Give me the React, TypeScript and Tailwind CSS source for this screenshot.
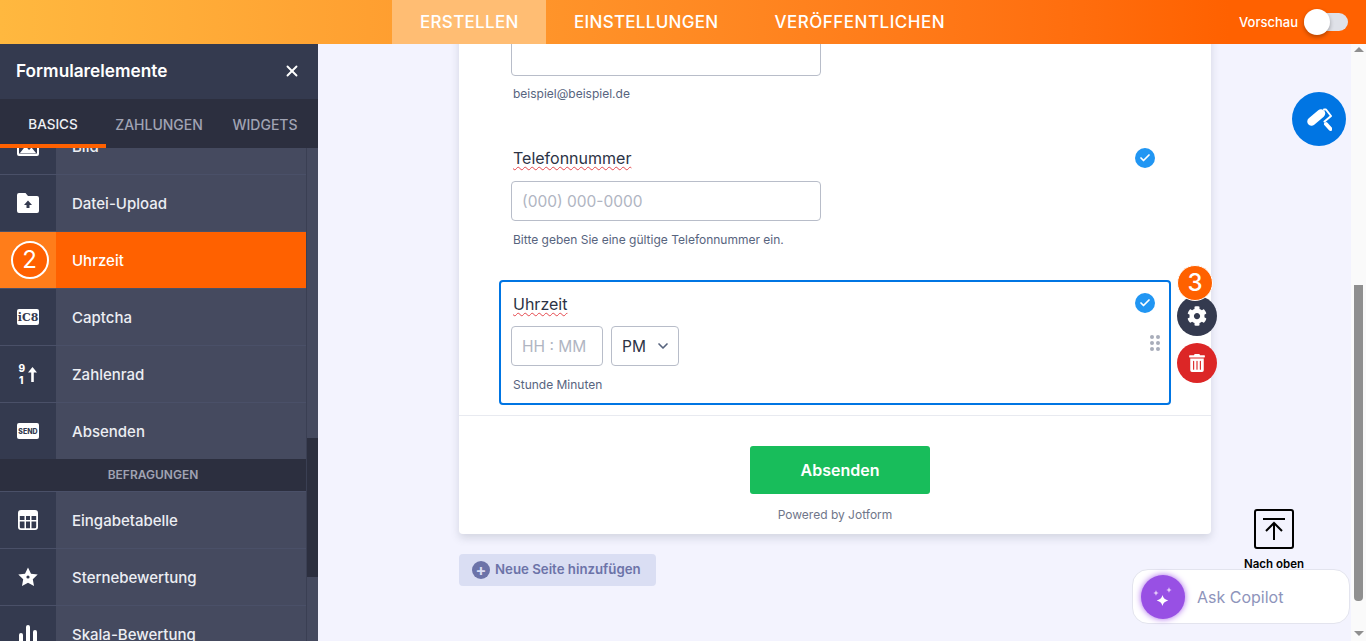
import { Check, ChevronDown, X } from 'lucide-react';
import { FaCog, FaTrashAlt } from 'react-icons/fa';
import type { ReactNode } from 'react';

const FolderIcon = () => (
    <svg width="22" height="20" viewBox="0 0 22 20">
        <path fill="#fff" d="M2 0h6.500l2.500 3h9a2 2 0 0 1 2 2v13a2 2 0 0 1-2 2H2a2 2 0 0 1-2-2V2a2 2 0 0 1 2-2z" />
        <path fill="#343a4f" d="M11 7.500l4 4.500h-2.500v3h-3v-3H7z" />
    </svg>
);

const ImageIcon = () => (
    <svg width="22" height="20" viewBox="0 0 22 20">
        <path fill="#fff" d="M2 0h18a2 2 0 0 1 2 2v16a2 2 0 0 1-2 2H2a2 2 0 0 1-2-2V2a2 2 0 0 1 2-2zm0 2.500V17.500h18V2.500z" />
        <path fill="#fff" d="M3 17l5.500-7 3.500 4 2.500-2.500L19 17z" />
    </svg>
);

const CaptchaIcon = () => (
    <div className="flex h-[16px] w-[22px] items-center justify-center rounded-[2px] bg-white font-['DejaVu_Serif',serif] text-[11px] leading-none font-bold text-[#343a4f]">
        iC8
    </div>
);

const SpinnerIcon = () => (
    <svg width="20" height="26" viewBox="0 -3 20 26">
        <text x="0.500" y="8" fill="#fff" fontSize="10" fontWeight="800" fontFamily="Inter, sans-serif">9</text>
        <text x="1" y="20" fill="#fff" fontSize="10" fontWeight="800" fontFamily="Inter, sans-serif">1</text>
        <path fill="#fff" d="M14.500 3l4.500 5.500h-3.200V18h-2.600V8.500H10z" />
    </svg>
);

const SendIcon = () => (
    <div className="flex h-[16px] w-[22px] items-center justify-center rounded-[2px] bg-white font-['Inter',sans-serif] text-[7px] leading-none font-extrabold text-[#343a4f]">
        SEND
    </div>
);

const TableIcon = () => (
    <svg width="20" height="20" viewBox="0 0 20 20">
        <path
            fill="#fff"
            fillRule="evenodd"
            d="M3 0h14a3 3 0 0 1 3 3v14a3 3 0 0 1-3 3H3a3 3 0 0 1-3-3V3a3 3 0 0 1 3-3zM1.800 6v4h4.700V6zm6.200 0v4h4V6zm5.500 0v4h4.700V6zM1.800 11.500V17a1.200 1.200 0 0 0 1.200 1.200h3.500v-6.700zm6.200 0v6.700h4v-6.700zm5.500 0v6.700H17a1.200 1.200 0 0 0 1.200-1.200v-5.500z"
        />
    </svg>
);

const StarIcon = () => (
    <svg width="20" height="20" viewBox="0 0 20 20">
        <path fill="#fff" d="M10 .500l3 6.200 6.700.9-4.900 4.700 1.200 6.700-6-3.200-6 3.200 1.200-6.700L.300 7.600 7 6.700z" />
        <circle cx="10" cy="10" r="1.600" fill="#343a4f" />
    </svg>
);

const ScaleIcon = () => (
    <svg width="20" height="20" viewBox="0 0 20 20">
        <rect x="1" y="9" width="4" height="11" rx="2" fill="#fff" />
        <rect x="8" y="1" width="4" height="19" rx="2" fill="#fff" />
        <rect x="15" y="6" width="4" height="14" rx="2" fill="#fff" />
    </svg>
);

const RollerIcon = () => (
    <svg width="26" height="26" viewBox="0 0 26 26" fill="none" stroke="#fff" strokeLinecap="round" strokeLinejoin="round">
        <path strokeWidth="8.500" d="M5.500 15.500L15 7.500" />
        <path strokeWidth="2" d="M18 3.500L20 3.500L25 10L18.500 15.500" />
        <path strokeWidth="4" d="M20 18L24.500 23" />
    </svg>
);

const CopilotIcon = () => (
    <svg width="24" height="24" viewBox="0 0 24 24">
        <path fill="#fff" d="M11.500 10c.9 3.200 2 4.200 5.800 5.500-3.800 1.300-4.900 2.300-5.800 5.500-.9-3.200-2-4.200-5.800-5.500 3.800-1.300 4.900-2.300 5.800-5.500z" />
        <path fill="#e3c8f8" d="M5 5c.4 1.900 1.100 2.600 3 3-1.900.4-2.600 1.100-3 3-.4-1.900-1.100-2.600-3-3 1.900-.4 2.600-1.100 3-3z" />
        <path fill="#e3c8f8" d="M18 2c.4 1.900 1.100 2.600 3 3-1.900.4-2.600 1.100-3 3-.4-1.900-1.100-2.600-3-3 1.900-.4 2.600-1.100 3-3z" />
    </svg>
);

const NavRow = ({ icon, label, active }: { icon: ReactNode; label: string; active?: boolean }) => (
    <div className={`flex h-[57px] shrink-0 border-b border-[#4a5068] ${active ? 'bg-[#ff6100]' : 'bg-[#454a5f]'}`}>
        <div className={`flex w-[56px] shrink-0 items-center justify-center ${active ? 'bg-[#ff7d1a]' : 'bg-[#343a4f]'}`}>{icon}</div>
        <div className={`flex items-center pt-[2px] pl-4 text-[15px] font-medium ${active ? 'text-white' : 'text-[#eceef3]'}`}>{label}</div>
    </div>
);

const CheckBadge = () => (
    <div className="flex h-5 w-5 items-center justify-center rounded-full bg-[#2196f3]">
        <Check size={12} strokeWidth={3.5} className="text-white" />
    </div>
);

const Sidebar = () => (
    <aside className="flex w-[318px] shrink-0 flex-col overflow-hidden bg-[#454a5f]">
        <div className="flex h-[55px] shrink-0 items-center justify-between bg-[#343a4f] pr-[17px] pb-[1px] pl-4 text-white">
            <span className="text-[17.250px] font-semibold">Formularelemente</span>
            <X size={18} strokeWidth={2.500} />
        </div>
        <div className="relative z-10 flex h-[49px] shrink-0 items-center bg-[#2c2f3f] text-[14px] font-medium">
            <div className="flex h-full w-[106px] items-center justify-center border-b-[4px] border-[#ff6100] pt-[6px] text-[13.500px] text-[#eef0f5]">BASICS</div>
            <div className="flex w-[106px] justify-center pt-[2px] text-[#a0a3b3]">ZAHLUNGEN</div>
            <div className="flex w-[106px] justify-center pt-[2px] text-[#a0a3b3]">WIDGETS</div>
        </div>
        <div className="flex min-h-0 flex-1">
            <div className="-mt-[30px] flex w-[306px] shrink-0 flex-col">
                <NavRow icon={<ImageIcon />} label="Bild" />
                <NavRow icon={<FolderIcon />} label="Datei-Upload" />
                <NavRow
                    active
                    label="Uhrzeit"
                    icon={
                        <div className="ml-[3px] flex h-[38px] w-[38px] items-center justify-center rounded-full border-2 border-white bg-[#ff6100] text-[24px] leading-none text-white">
                            2
                        </div>
                    }
                />
                <NavRow icon={<CaptchaIcon />} label="Captcha" />
                <NavRow icon={<SpinnerIcon />} label="Zahlenrad" />
                <div className="-mb-px">
                    <NavRow icon={<SendIcon />} label="Absenden" />
                </div>
                <div className="flex h-[33px] shrink-0 items-center justify-center border-b border-[#4a5068] bg-[#2c2f3f] text-[12px] font-semibold text-[#a0a3b3]">
                    BEFRAGUNGEN
                </div>
                <NavRow icon={<TableIcon />} label="Eingabetabelle" />
                <NavRow icon={<StarIcon />} label="Sternebewertung" />
                <NavRow icon={<ScaleIcon />} label="Skala-Bewertung" />
            </div>
            <div className="flex w-[12px] flex-col border-l border-[#3a3f53] pt-[290px]">
                <div className="h-[139px] w-full bg-[#2c2f3f]" />
            </div>
        </div>
    </aside>
);

const FormCard = () => (
    <div className="-mt-[75px] ml-[141px] w-[752px] rounded-b-[4px] bg-white shadow-[0_4px_8px_rgba(84,95,111,0.2)]">
        <div className="px-[52px] pt-[62px]">
            <div className="h-[45px] w-[310px] rounded-[4px] border border-[#b8bdc9]" />
            <div className="mt-[10px] pl-[2px] text-[12px] leading-[15px] text-[#57647e]">beispiel@beispiel.de</div>
        </div>
        <div className="flex justify-between pt-[47px] pr-[56px] pl-[54px]">
            <span className="-mt-[2px] mb-[2px] text-[16px] leading-[24px] text-[#2c3345] underline decoration-[#e5484d] decoration-wavy decoration-1 underline-offset-2">Telefonnummer</span>
            <CheckBadge />
        </div>
        <div className="mt-[9px] px-[52px]">
            <div className="flex h-[40px] w-[310px] items-center rounded-[4px] border border-[#b8bdc9] px-[10px] pt-[2px] text-[15.500px] text-[#b0b5c2]">(000) 000-0000</div>
            <div className="mt-[11px] pl-[2px] text-[12px] leading-[15px] text-[#57647e]">Bitte geben Sie eine gültige Telefonnummer ein.</div>
        </div>
        <div className="mx-[40px] mt-[33px] h-[125px] rounded-[4px] border-2 border-[#0075e3] pt-[10px] pr-[12px] pl-[10px]">
            <div className="flex h-[25px] justify-between pr-[2px] pl-[2px]">
                <span className="text-[16px] leading-[24px] text-[#2c3345] underline decoration-[#e5484d] decoration-wavy decoration-1 underline-offset-2">Uhrzeit</span>
                <div className="mt-[1px]">
                    <CheckBadge />
                </div>
            </div>
            <div className="mt-[9px] flex items-center justify-between">
                <div className="flex gap-2">
                    <div className="flex h-[40px] w-[92px] items-center rounded-[4px] border border-[#b8bdc9] px-[10px] pt-[2px] text-[15.500px] text-[#b0b5c2]">HH : MM</div>
                    <div className="flex h-[40px] w-[68px] items-center justify-between rounded-[4px] border border-[#b8bdc9] pr-[7px] pl-[10px] text-[15.500px] text-[#2c3345]">
                        <span className="pt-[2px]">PM</span>
                        <ChevronDown size={16} strokeWidth={2.500} className="text-[#57647e]" />
                    </div>
                </div>
                <div className="-mr-[3px] mb-[6px] grid grid-cols-2 gap-[2px]">
                    {[0, 1, 2, 3, 4, 5].map((dot) => (
                        <span key={dot} className="h-[4px] w-[4px] rounded-full bg-[#a8adba]" />
                    ))}
                </div>
            </div>
            <div className="mt-[11px] pl-[2px] text-[12px] leading-[15px] text-[#57647e]">Stunde Minuten</div>
        </div>
        <div className="mt-[10px] flex flex-col items-center border-t border-[#e8eaf0] pt-[30px] pb-[12px]">
            <div className="ml-[10px] flex h-[48px] w-[180px] items-center justify-center rounded-[3px] bg-[#18bd5b] text-[16px] font-semibold text-white">Absenden</div>
            <div className="mt-[13px] text-[12px] leading-[15px] text-[#6f7689]">Powered by Jotform</div>
        </div>
    </div>
);

export default function App() {
    return (
        <div className="flex h-[641px] w-[1366px] flex-col overflow-hidden bg-[#f3f3fe] font-['Inter',sans-serif]">
            {/* Header */}
            <header className="flex h-[44px] shrink-0 items-center bg-gradient-to-r from-[#ffb83f] to-[#ff6100] to-[90%] pr-[18px] pl-[392px] text-white">
                <div className="flex h-full w-[154px] items-center bg-[#ffbd73] pt-[2px] pl-[28px] text-[17px] font-medium tracking-[0.3px]">ERSTELLEN</div>
                <div className="flex h-full items-center px-[28px] pt-[2px] text-[17px] font-medium tracking-[0.3px]">EINSTELLUNGEN</div>
                <div className="flex h-full items-center px-[28px] pt-[2px] text-[17px] font-medium tracking-[0.5px]">VERÖFFENTLICHEN</div>
                <div className="ml-auto flex items-center gap-[6px]">
                    <span className="pt-[2px] text-[13px] font-medium">Vorschau</span>
                    <div className="flex h-[18px] w-[44px] items-center rounded-full bg-[#dfe1e8]">
                        <div className="h-[26px] w-[26px] rounded-full bg-white shadow-[0_2px_4px_rgba(0,0,0,0.3)]" />
                    </div>
                </div>
            </header>

            <div className="flex min-h-0 flex-1">
                <Sidebar />

                <main className="relative min-w-0 flex-1 overflow-hidden">
                    <FormCard />
                    <div className="mt-[20px] ml-[141px] flex h-[32px] w-[197px] items-center gap-[5px] rounded-[4px] bg-[#dadef3] pl-[13px] text-[13.250px] font-semibold text-[#6c73a8]">
                        <span className="flex h-[18px] w-[18px] items-center justify-center rounded-full bg-[#6c73a8] text-[16px] leading-none font-bold text-[#dadef3]">+</span>
                        Neue Seite hinzufügen
                    </div>

                    {/* Floating element actions */}
                    <div className="absolute top-[252px] left-[859px] flex h-10 w-10 items-center justify-center rounded-full bg-[#343a4f]">
                        <FaCog size={20} className="text-white" />
                    </div>
                    <div className="absolute top-[299px] left-[859px] flex h-10 w-10 items-center justify-center rounded-full bg-[#dc2626]">
                        <FaTrashAlt size={18} className="text-white" />
                    </div>
                    <div className="absolute top-[221px] left-[859px] flex h-[36px] w-[36px] items-center justify-center rounded-full border border-white bg-[#ff6100] text-[24px] leading-none font-medium text-white">
                        3
                    </div>

                    {/* Floating page tools */}
                    <div className="absolute top-[48px] left-[974px] flex h-[54px] w-[54px] items-center justify-center rounded-full bg-[#0075e3]">
                        <RollerIcon />
                    </div>
                    <div className="absolute top-[465px] left-[916px] flex w-[80px] flex-col items-center">
                        <div className="flex h-[40px] w-[40px] items-center justify-center rounded-[3px] border-2 border-black">
                            <svg width="26" height="26" viewBox="0 0 26 26" fill="none" stroke="#000" strokeWidth="2">
                                <path d="M2 3h22M13 24V8M5 15l8-8 8 8" />
                            </svg>
                        </div>
                        <span className="mt-[8px] text-[11.500px] leading-[14px] font-semibold whitespace-nowrap text-black">Nach oben</span>
                    </div>
                    <div className="absolute top-[525px] left-[814px] flex h-[55px] w-[218px] items-center gap-[12px] rounded-[16px] border border-[#e3e4ee] bg-white pl-[8px]">
                        <div className="flex h-[44px] w-[44px] items-center justify-center rounded-full bg-[#9850e4] shadow-[0_0_6px_#a864ec]">
                            <CopilotIcon />
                        </div>
                        <span className="text-[16px] text-[#8e94bb]">Ask Copilot</span>
                    </div>
                </main>

                {/* Page scrollbar */}
                <div className="relative flex w-[15px] shrink-0 flex-col items-center bg-[#fafafa] pt-[241px]">
                    <div className="absolute top-[3px] h-0 w-0 border-x-[5px] border-b-[5px] border-x-transparent border-b-[#8f8f8f]" />
                    <div className="h-[316px] w-[9px] rounded-b-[4px] bg-[#8f8f8f]" />
                    <div className="absolute bottom-[5px] h-0 w-0 border-x-[5px] border-t-[5px] border-x-transparent border-t-[#8f8f8f]" />
                </div>
            </div>
        </div>
    );
}
